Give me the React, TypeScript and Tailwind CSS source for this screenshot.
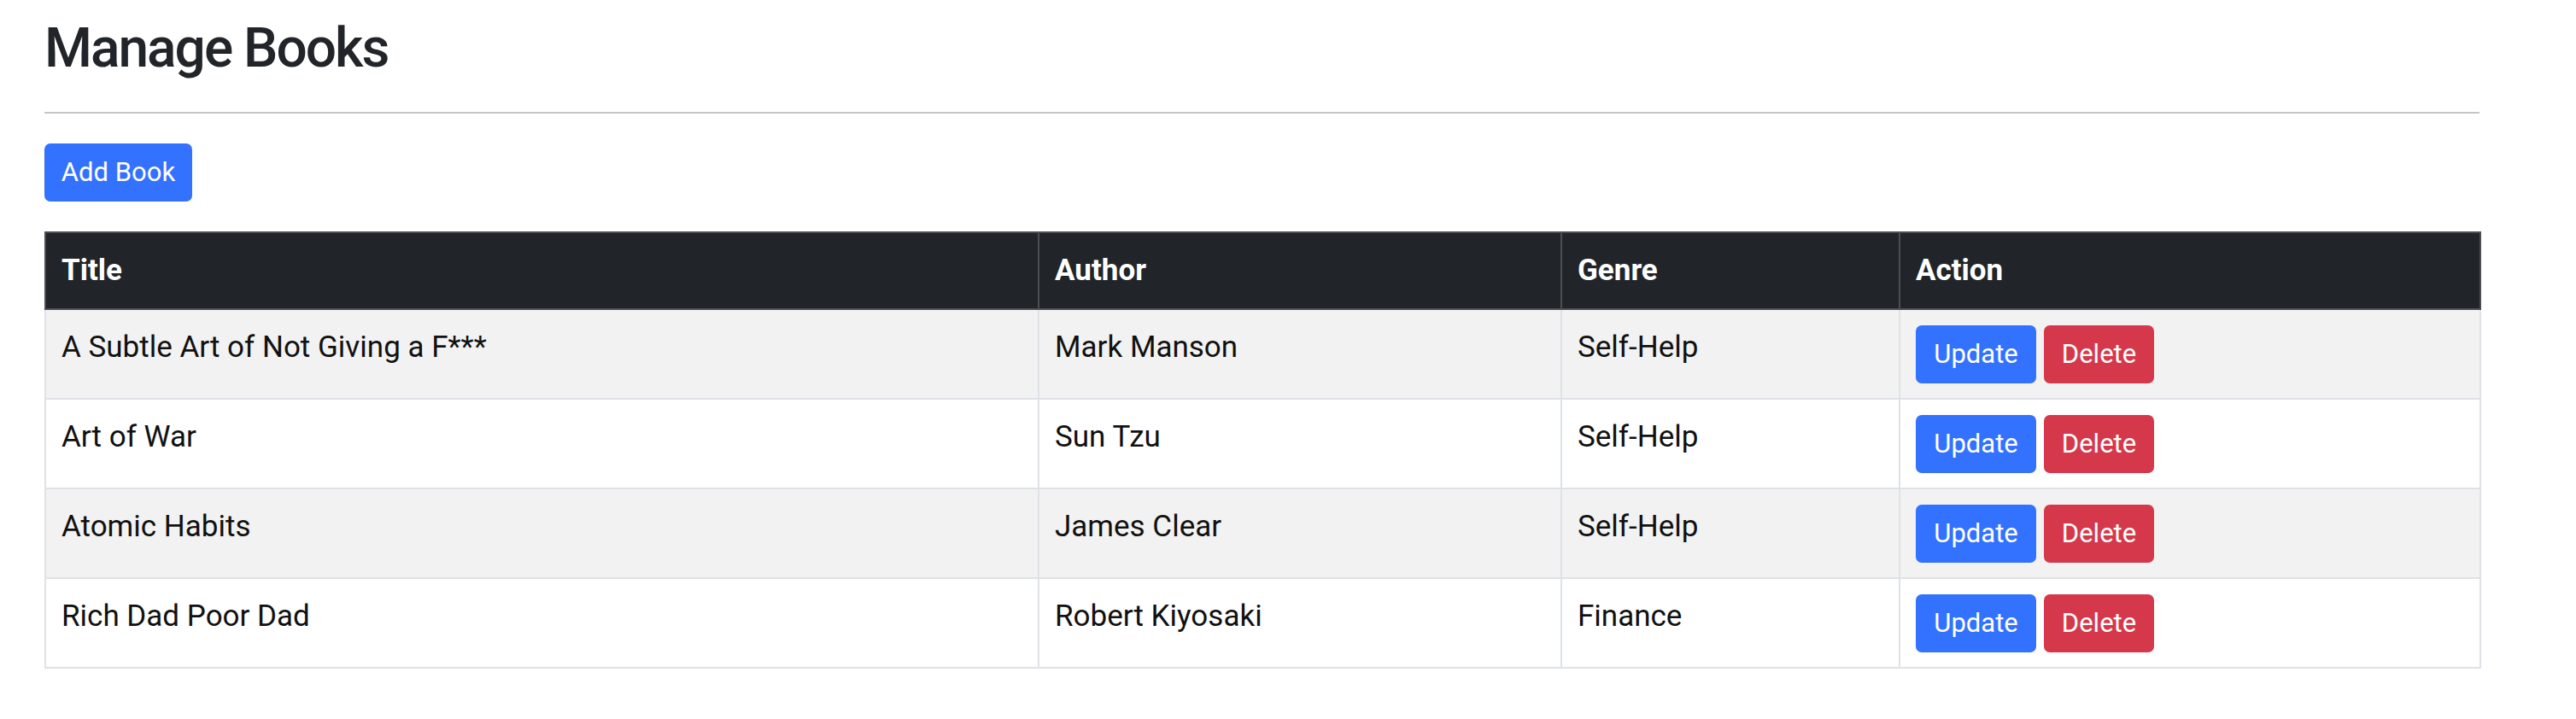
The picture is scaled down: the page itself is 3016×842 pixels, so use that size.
const books = [
  { title: "A Subtle Art of Not Giving a F***", author: "Mark Manson", genre: "Self-Help" },
  { title: "Art of War", author: "Sun Tzu", genre: "Self-Help" },
  { title: "Atomic Habits", author: "James Clear", genre: "Self-Help" },
  { title: "Rich Dad Poor Dad", author: "Robert Kiyosaki", genre: "Finance" },
];

export default function App() {
  return (
    <div className="min-h-screen bg-white font-['Roboto',sans-serif] text-[#212529]">
      {/* container */}
      <div className="ml-[52px] w-[2851px] pt-[15px]">
        <h2 className="text-[64px] leading-[84px] font-medium tracking-[-2px]">Manage Books</h2>
        <hr className="mt-[32px] h-[2px] border-0 bg-[#c4c4c4]" />

        <button className="mt-[35px] flex h-[68px] w-[173px] items-center justify-center rounded-[7px] bg-[#3371ff] text-[31px] leading-[46px] text-white">
          Add Book
        </button>

        <table className="mt-[35px] w-full table-fixed border-collapse text-[35px] leading-[52px]">
          <colgroup>
            <col className="w-[1163px]" />
            <col className="w-[612px]" />
            <col className="w-[396px]" />
            <col className="w-[680px]" />
          </colgroup>
          <thead>
            <tr className="bg-[#212529] text-white">
              {["Title", "Author", "Genre", "Action"].map((h) => (
                <th key={h} className="border-2 border-[#4b4f53] px-[18px] py-[18px] text-left font-bold">
                  {h}
                </th>
              ))}
            </tr>
          </thead>
          <tbody className="text-[#111]">
            {books.map((b, i) => (
              <tr key={b.title} className={i % 2 === 0 ? "bg-[#f2f2f2]" : "bg-white"}>
                <td className="border-2 border-[#dee2e6] px-[18px] pt-[18px] pb-[17px] align-top">{b.title}</td>
                <td className="border-2 border-[#dee2e6] px-[18px] pt-[18px] pb-[17px] align-top">{b.author}</td>
                <td className="border-2 border-[#dee2e6] px-[18px] pt-[18px] pb-[17px] align-top">{b.genre}</td>
                <td className="border-2 border-[#dee2e6] px-[18px] pt-[18px] pb-[17px] align-top">
                  <div className="flex gap-[9px]">
                    <button className="flex h-[68px] w-[141px] items-center justify-center rounded-[7px] bg-[#3371ff] text-[31px] text-white">
                      Update
                    </button>
                    <button className="flex h-[68px] w-[129px] items-center justify-center rounded-[7px] bg-[#d5384a] text-[31px] text-white">
                      Delete
                    </button>
                  </div>
                </td>
              </tr>
            ))}
          </tbody>
        </table>
      </div>
    </div>
  );
}
